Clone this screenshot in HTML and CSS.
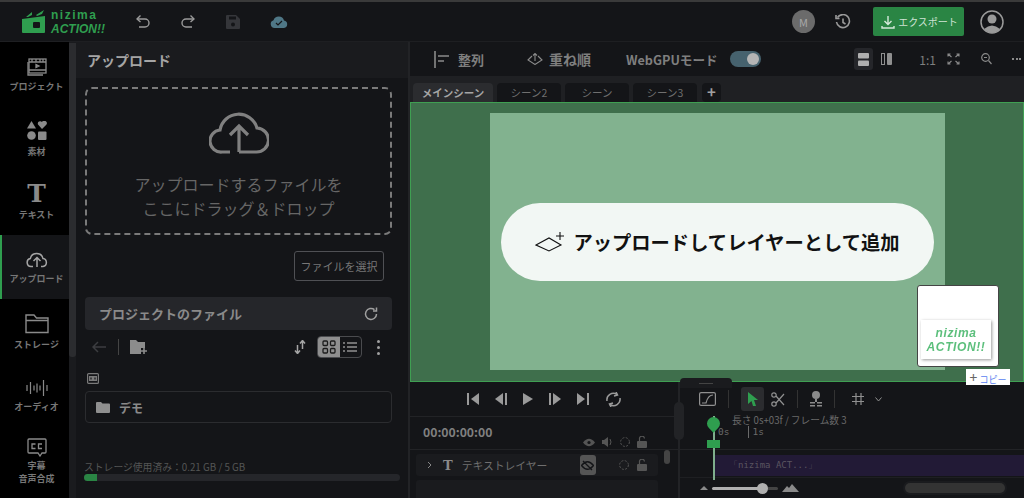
FILE: index.html
```html
<!DOCTYPE html>
<html lang="ja">
<head>
    <meta charset="UTF-8">
    <title>nizima ACTION!!</title>
    <link rel="stylesheet" href="styles.css">
</head>
<body>
    <header class="topbar">
        <div class="logo">
            <svg class="logo-mark" width="24" height="24" viewBox="0 0 24 24"><path d="M0 9 L23 6 L23 22 Q23 23 22 23 L1 23 Q0 23 0 22Z" fill="#2f9e4f"/><path d="M4 7 L10 2 L10 5 L6 7Z M14 5 L22 0 L20 4 L15 6Z" fill="#2f9e4f"/><rect x="11" y="12" width="7" height="6" rx="1" fill="#141518"/></svg>
            <div class="logo-text"><span class="logo-name">nizima</span><span class="logo-action">ACTION!!</span></div>
        </div>
        <button class="top-icon undo"><svg width="14" height="13" viewBox="0 0 14 13" fill="none" stroke="#9a9a9a" stroke-width="1.4"><path d="M4.5 0.5 L1 4 L4.5 7"/><path d="M1 4 H9 A4 4 0 0 1 9 12 H3"/></svg></button>
        <button class="top-icon redo"><svg width="14" height="13" viewBox="0 0 14 13" fill="none" stroke="#9a9a9a" stroke-width="1.4"><path d="M9.5 0.5 L13 4 L9.5 7"/><path d="M13 4 H5 A4 4 0 0 0 5 12 H11"/></svg></button>
        <button class="top-icon save"><svg width="14" height="14" viewBox="0 0 14 14"><path d="M1 0 H10 L14 4 V13 Q14 14 13 14 H1 Q0 14 0 13 V1 Q0 0 1 0Z" fill="#35363a"/><rect x="3" y="1.5" width="7" height="3" fill="#141518"/><circle cx="7" cy="9.5" r="2" fill="#141518"/></svg></button>
        <button class="top-icon cloud"><svg width="18" height="12" viewBox="0 0 18 12"><path d="M4.5 12 A4 4 0 0 1 3.5 4.2 A5.5 5.5 0 0 1 14 4.5 A3.8 3.8 0 0 1 14 12Z" fill="#4f7786"/><path d="M6 7 L8 9 L12 5" stroke="#141518" stroke-width="1.2" fill="none"/></svg></button>
        <div class="top-right">
            <span class="avatar">M</span>
            <svg class="history" width="16" height="16" viewBox="0 0 16 16" fill="none" stroke="#9a9a9a" stroke-width="1.6"><path d="M2.5 3.5 A6.5 6.5 0 1 1 1.5 8"/><path d="M1 1 V4.5 H4.5"/><path d="M8 4.5 V8.5 L10.5 10"/></svg>
            <button class="export">
                <svg width="14" height="14" viewBox="0 0 14 14" fill="none" stroke="#d5e8da" stroke-width="1.4"><path d="M7 1 V9 M3.5 6 L7 9.5 L10.5 6 M1 11 V13 H13 V11"/></svg>
                エクスポート
            </button>
            <svg class="profile" width="24" height="24" viewBox="0 0 24 24"><circle cx="12" cy="12" r="11" fill="none" stroke="#9a9a9a" stroke-width="1.5"/><circle cx="12" cy="9" r="4.5" fill="#9a9a9a"/><path d="M4 19 Q12 12 20 19 Q12 27 4 19Z" fill="#9a9a9a"/></svg>
        </div>
    </header>

    <div class="workspace">
        <nav class="sidebar">
            <a class="side-item">
                <svg width="20" height="18" viewBox="0 0 20 18" fill="none" stroke="#8a8a8a" stroke-width="1.3"><rect x="2" y="1" width="17" height="14"/><path d="M1 4 V17 H16"/><path d="M2 4 H19 M2 12 H19 M5 1 V4 M9 1 V4 M13 1 V4 M16 1 V4"/><path d="M9 6.5 L12 8 L9 9.5Z" fill="#8a8a8a"/></svg>
                <span>プロジェクト</span>
            </a>
            <a class="side-item">
                <svg width="20" height="20" viewBox="0 0 20 20" fill="#8a8a8a"><path d="M4.5 0 L9 7.5 H0Z"/><path d="M15 8 L11 3.5 A2.4 2.4 0 0 1 15 1 A2.4 2.4 0 0 1 19.5 3.5Z"/><circle cx="4.5" cy="14.5" r="4.3"/><rect x="11" y="10.5" width="8.5" height="8.5" rx="1"/></svg>
                <span>素材</span>
            </a>
            <a class="side-item text-item">
                <span class="t-glyph">T</span>
                <span>テキスト</span>
            </a>
            <a class="side-item active">
                <svg width="22" height="17" viewBox="0 0 22 17" fill="none" stroke="#a5a5a5" stroke-width="1.5"><path d="M7 15.5 H5 A4 4 0 0 1 4.3 7.6 A6.5 6.5 0 0 1 17 7.6 A4 4 0 0 1 17 15.5 H15"/><path d="M11 16 V7 M7.5 10 L11 6.5 L14.5 10"/></svg>
                <span>アップロード</span>
            </a>
            <a class="side-item">
                <svg width="24" height="21" viewBox="0 0 24 21" fill="none" stroke="#8a8a8a" stroke-width="1.4"><path d="M1 19.5 V2 H9 L11.5 5 H23 V19.5Z M1 7.5 H23"/></svg>
                <span>ストレージ</span>
            </a>
            <a class="side-item audio-item">
                <svg width="22" height="16" viewBox="0 0 22 16" stroke="#8a8a8a" stroke-width="1.2"><path d="M1 5 V11 M4.5 2 V14 M8 5.5 V10.5 M11 3.5 V12.5 M14 5.5 V10.5 M17.5 0 V16 M21 5 V11"/></svg>
                <span>オーディオ</span>
            </a>
            <a class="side-item cc-item">
                <svg width="20" height="19" viewBox="0 0 20 19" fill="none" stroke="#8a8a8a" stroke-width="1.3"><path d="M2 1 H18 Q19 1 19 2 V14 Q19 15 18 15 H15 L13 18 L11 15 H2 Q1 15 1 14 V2 Q1 1 2 1Z"/><path d="M8.5 6 H5 V10.5 H8.5 M15 6 H11.5 V10.5 H15"/></svg>
                <span>字幕<br>音声合成</span>
            </a>
        </nav>
        <div class="side-scroll"><div class="side-thumb"></div></div>

        <section class="panel">
            <h2 class="panel-title">アップロード</h2>
            <div class="panel-body">
                <div class="dropzone">
                    <svg width="60" height="44" viewBox="0 0 60 44" fill="none" stroke="#808080" stroke-width="3.2"><path d="M21 42 H13 A11 11 0 0 1 11 20 A19 19 0 0 1 48 18 A12 12 0 0 1 47 42 H30"/><path d="M30 42 V17 M21 25 L30 16 L39 25"/></svg>
                    <p>アップロードするファイルを<br>ここにドラッグ＆ドロップ</p>
                </div>
                <div class="select-row"><button class="select-file">ファイルを選択</button></div>
                <div class="files-bar">
                    <span>プロジェクトのファイル</span>
                    <svg width="14" height="14" viewBox="0 0 14 14" fill="none" stroke="#a0a0a0" stroke-width="1.5"><path d="M12.5 7 A5.5 5.5 0 1 1 10.5 2.7"/><path d="M12.5 0.5 V4 H9"/></svg>
                </div>
                <div class="files-tools">
                    <svg width="14" height="12" viewBox="0 0 14 12" fill="none" stroke="#3c3d40" stroke-width="1.5"><path d="M14 6 H1 M6 1 L1 6 L6 11"/></svg>
                    <i class="tool-sep"></i>
                    <svg width="18" height="14" viewBox="0 0 18 14"><path d="M0 0 H6 L8 2 H15 V8 H11 V14 H0Z" fill="#8c8c8c"/><path d="M14 8 V14 M11 11 H17" stroke="#8c8c8c" stroke-width="1.6"/></svg>
                    <svg class="sort-icon" width="12" height="14" viewBox="0 0 12 14" fill="none" stroke="#a5a5a5" stroke-width="1.5"><path d="M3.5 5 V13 M1 10.5 L3.5 13.5 L6 10.5 M8.5 9 V1 M6 3.5 L8.5 0.5 L11 3.5"/></svg>
                    <div class="view-switch">
                        <span class="view-btn on"><svg width="14" height="14" viewBox="0 0 14 14" fill="none" stroke="#1c1c1c" stroke-width="1.3"><rect x="1" y="1" width="4.5" height="4.5" rx="1"/><rect x="8.5" y="1" width="4.5" height="4.5" rx="1"/><rect x="1" y="8.5" width="4.5" height="4.5" rx="1"/><rect x="8.5" y="8.5" width="4.5" height="4.5" rx="1"/></svg></span>
                        <span class="view-btn"><svg width="14" height="12" viewBox="0 0 14 12" stroke="#909090" stroke-width="1.4"><path d="M4 2 H14 M4 6 H14 M4 10 H14 M0 2 H2 M0 6 H2 M0 10 H2"/></svg></span>
                    </div>
                    <span class="dots-v"><i></i><i></i><i></i></span>
                </div>
                <svg class="film-mini" width="12" height="11" viewBox="0 0 12 11"><rect x="0.6" y="0.6" width="10.8" height="9.8" rx="1" fill="none" stroke="#7a7a7a" stroke-width="1.2"/><path d="M2 3 H10 V8 H2Z" fill="#7a7a7a"/><path d="M4 4.5 V6.5 M8 4.5 V6.5" stroke="#141518" stroke-width="1.2"/></svg>
                <div class="folder-row">
                    <svg width="14" height="11" viewBox="0 0 14 11"><path d="M0 1 Q0 0 1 0 H5 L6.5 1.5 H13 Q14 1.5 14 2.5 V10 Q14 11 13 11 H1 Q0 11 0 10Z" fill="#8f8f8f"/></svg>
                    <span>デモ</span>
                </div>
            </div>
            <div class="storage">
                <span>ストレージ使用済み：0.21 GB / 5 GB</span>
                <div class="storage-bar"><div class="storage-fill"></div></div>
            </div>
        </section>

        <main class="editor">
            <div class="editor-tools">
                <svg class="tool-align" width="16" height="17" viewBox="0 0 16 17" stroke="#8a8a8a" stroke-width="1.6"><path d="M1 0 V17 M4 5 H15 M4 10 H10"/></svg>
                <span class="tool-label">整列</span>
                <svg class="tool-order" width="16" height="12" viewBox="0 0 16 12" fill="none" stroke="#8a8a8a" stroke-width="1.1"><path d="M5 3 L1 7 L8 11.5 L15 7 L11 3"/><path d="M8 8 V0.5 M6 2.5 L8 0.5 L10 2.5"/></svg>
                <span class="tool-label order-label">重ね順</span>
                <span class="tool-label webgpu">WebGPUモード</span>
                <span class="toggle"><i></i></span>
                <div class="tools-right">
                    <span class="layout-btn on"><svg width="11" height="13" viewBox="0 0 11 13" fill="#b0b0b0"><rect width="11" height="5.5" rx="1"/><rect y="7.5" width="11" height="5.5" rx="1"/></svg></span>
                    <span class="layout-btn"><svg width="11" height="12" viewBox="0 0 11 12" fill="#8f8f8f"><rect x="0.5" y="0.5" width="3" height="11" fill="none" stroke="#8f8f8f"/><rect x="6" width="5" height="12" rx="1"/></svg></span>
                    <span class="ratio">1:1</span>
                    <svg class="fit" width="13" height="12" viewBox="0 0 13 12" fill="none" stroke="#8a8a8a" stroke-width="1.1"><path d="M1 3.5 V1 H3.5 M1 1 L4.5 4 M12 3.5 V1 H9.5 M12 1 L8.5 4 M1 8.5 V11 H3.5 M1 11 L4.5 8 M12 8.5 V11 H9.5 M12 11 L8.5 8"/></svg>
                    <svg class="zoom-icon" width="11" height="12" viewBox="0 0 11 12" fill="none" stroke="#8a8a8a" stroke-width="1.2"><circle cx="4.5" cy="4.5" r="3.8"/><path d="M7.5 7.5 L10.5 11 M3 4.5 H6"/></svg>
                    <span class="dots-h"><i></i><i></i><i></i></span>
                </div>
            </div>

            <div class="scene-tabs">
                <span class="scene-tab active">メインシーン</span>
                <span class="scene-tab">シーン2</span>
                <span class="scene-tab">シーン</span>
                <span class="scene-tab">シーン3</span>
                <span class="scene-add">+</span>
            </div>

            <div class="canvas">
                <div class="stage"></div>
                <div class="drop-pill">
                    <svg width="30" height="22" viewBox="0 0 30 22" fill="none" stroke="#111" stroke-width="1.1"><path d="M1 14 L14 7 L26 14 L14 20Z"/><path d="M21 5 H29 M25 1 V9"/></svg>
                    <span>アップロードしてレイヤーとして追加</span>
                </div>
                <div class="drag-thumb">
                    <div class="drag-card"><span>nizima<br>ACTION!!</span></div>
                </div>
                <div class="copy-tag"><b>+</b> コピー</div>
            </div>

            <div class="timeline">
                <div class="tl-left">
                    <div class="transport">
                        <svg width="12" height="12" viewBox="0 0 12 12" fill="#9a9a9a"><rect x="0" width="2" height="12"/><path d="M12 0 V12 L4 6Z"/></svg>
                        <svg width="12" height="12" viewBox="0 0 12 12" fill="#9a9a9a"><rect x="10" width="2" height="12"/><path d="M8 0 V12 L0 6Z"/></svg>
                        <svg width="10" height="12" viewBox="0 0 10 12" fill="#9a9a9a"><path d="M0 0 V12 L10 6Z"/></svg>
                        <svg width="12" height="12" viewBox="0 0 12 12" fill="#9a9a9a"><rect x="0" width="2" height="12"/><path d="M4 0 V12 L12 6Z"/></svg>
                        <svg width="12" height="12" viewBox="0 0 12 12" fill="#9a9a9a"><rect x="10" width="2" height="12"/><path d="M0 0 V12 L8 6Z"/></svg>
                        <svg width="17" height="15" viewBox="0 0 17 15" fill="none" stroke="#9a9a9a" stroke-width="1.5"><path d="M2 9 A6.5 6.5 0 0 1 12 2.5 M15 6 A6.5 6.5 0 0 1 5 12.5"/><path d="M11 0 L12.5 3 L9 4 M6 15 L4.5 12 L8 11"/></svg>
                    </div>
                    <div class="time-row">
                        <span class="timecode">00:00:00:00</span>
                        <div class="vis-icons">
                            <svg width="12" height="9" viewBox="0 0 12 9"><path d="M0 4.5 Q6 -3 12 4.5 Q6 12 0 4.5Z" fill="#555"/><circle cx="6" cy="4.5" r="1.6" fill="#141518"/></svg>
                            <svg width="11" height="10" viewBox="0 0 11 10" fill="#555"><path d="M0 3 H2 L6 0 V10 L2 7 H0Z"/><path d="M8 2 Q10 5 8 8" stroke="#555" fill="none"/></svg>
                            <svg width="10" height="10" viewBox="0 0 10 10" fill="none" stroke="#555" stroke-dasharray="2 1.5"><circle cx="5" cy="5" r="4.4"/></svg>
                            <svg width="10" height="12" viewBox="0 0 10 12"><rect y="5" width="10" height="7" rx="1" fill="#555"/><path d="M2.5 5 V3 A2.5 2.5 0 0 1 7.5 2.5" stroke="#555" fill="none" stroke-width="1.2"/></svg>
                        </div>
                    </div>
                    <div class="tracks">
                        <div class="track-list">
                            <div class="track-row">
                                <svg width="5" height="8" viewBox="0 0 5 8" fill="none" stroke="#888"><path d="M1 1 L4 4 L1 7"/></svg>
                                <span class="track-t">T</span>
                                <span class="track-name">テキストレイヤー</span>
                                <span class="hide-btn"><svg width="13" height="11" viewBox="0 0 13 11" fill="none" stroke="#141518" stroke-width="1.3"><path d="M0.5 5.5 Q6.5 -2 12.5 5.5 Q6.5 13 0.5 5.5Z M2 1 L11 10"/></svg></span>
                                <svg class="track-circle" width="10" height="10" viewBox="0 0 10 10" fill="none" stroke="#555" stroke-dasharray="2 1.5"><circle cx="5" cy="5" r="4.4"/></svg>
                                <svg width="10" height="12" viewBox="0 0 10 12"><rect y="5" width="10" height="7" rx="1" fill="#555"/><path d="M2.5 5 V3 A2.5 2.5 0 0 1 7.5 2.5" stroke="#555" fill="none" stroke-width="1.2"/></svg>
                            </div>
                            <div class="track-row empty"></div>
                        </div>
                        <div class="track-scroll"></div>
                    </div>
                </div>

                <div class="tl-right">
                    <div class="tl-tools">
                        <svg width="17" height="14" viewBox="0 0 17 14" fill="none" stroke="#909090" stroke-width="1.2"><rect x="0.6" y="0.6" width="15.8" height="12.8" rx="1.5"/><path d="M3 11 H7 Q9 3 14 3"/></svg>
                        <i class="tl-sep"></i>
                        <span class="tl-select"><svg width="10" height="14" viewBox="0 0 10 14" fill="#2f9e4f"><path d="M0 0 L10 8 H6 L8 14 L5 14 L3.5 9 L0 12Z"/></svg></span>
                        <svg width="14" height="15" viewBox="0 0 14 15" fill="none" stroke="#909090" stroke-width="1.2"><circle cx="3" cy="3" r="2.2"/><circle cx="3" cy="12" r="2.2"/><path d="M5 4 L13 13 M5 11 L13 2"/></svg>
                        <i class="tl-sep"></i>
                        <svg width="12" height="16" viewBox="0 0 12 16" fill="#8a8a8a"><circle cx="6" cy="4" r="4"/><rect x="5" y="8" width="2" height="3"/><path d="M0 11 H5 V12.5 H0Z M7 11 H12 V12.5 H7Z M0 14 H5 V15.5 H0Z M7 14 H12 V15.5 H7Z"/></svg>
                        <i class="tl-sep"></i>
                        <svg class="grid-icon" width="12" height="12" viewBox="0 0 12 12" stroke="#909090" stroke-width="1.2"><path d="M4 0 V12 M9 0 V12 M0 3.5 H12 M0 8.5 H12"/></svg>
                        <svg class="grid-more" width="7" height="5" viewBox="0 0 7 5" fill="none" stroke="#909090"><path d="M0.5 0.5 L3.5 4 L6.5 0.5"/></svg>
                    </div>
                    <div class="ruler">
                        <span class="duration">長さ 0s+03f / フレーム数 3</span>
                        <div class="ruler-marks"><span>0s</span><span class="mark-1s">1s</span></div>
                    </div>
                    <div class="clip-row"><div class="clip">「nizima ACT...」</div></div>
                    <div class="tl-bottom">
                        <svg width="8" height="4" viewBox="0 0 8 4" fill="#8a8a8a"><path d="M4 0 L8 4 H0Z"/></svg>
                        <div class="zoom-slider"><i></i></div>
                        <svg width="17" height="8" viewBox="0 0 17 8" fill="#8a8a8a"><path d="M0 8 L5 2 L7 4 L10 0 L17 8Z"/></svg>
                        <div class="h-scroll"><i></i></div>
                    </div>
                    <div class="playhead"><span class="pin"></span><span class="key"></span></div>
                </div>
                <div class="split-grip"></div>
                <div class="top-grip"><i></i></div>
            </div>
        </main>
    </div>
</body>
</html>
```

FILE: styles.css
```css
* {
    box-sizing: border-box;
}

body {
    margin: 0;
    width: 1024px;
    height: 498px;
    overflow: hidden;
    display: flex;
    flex-direction: column;
    background-color: #141518;
    color: #9a9a9a;
    font-family: "Noto Sans CJK JP", "Noto Sans", sans-serif;
}

button {
    font-family: inherit;
    border: none;
    background: none;
    padding: 0;
}

svg {
    display: block;
    flex: none;
}

/* top bar */
.topbar {
    height: 42px;
    flex: none;
    display: flex;
    align-items: center;
    padding-left: 22px;
    padding-right: 20px;
    border-top: 2px solid #3a3a3a;
    border-bottom: 1px solid #1e1f22;
    background-color: #141518;
}

.logo {
    display: flex;
    align-items: center;
    gap: 5px;
    width: 111px;
}

.logo-text {
    display: flex;
    flex-direction: column;
    color: #2f9e4f;
    font-family: "Liberation Sans", sans-serif;
    font-weight: 700;
    font-size: 12px;
    line-height: 14px;
}

.logo-name {
    letter-spacing: 1.5px;
}

.logo-action {
    font-style: italic;
}

.top-icon {
    display: flex;
    justify-content: center;
    width: 20px;
}

.redo { margin-left: 25px; }
.save { margin-left: 25px; }
.cloud { margin-left: 26px; }

.top-right {
    margin-left: auto;
    display: flex;
    align-items: center;
}

.avatar {
    width: 23px;
    height: 23px;
    border-radius: 50%;
    background-color: #6b6b6b;
    color: #a8a8a8;
    font-size: 11px;
    display: flex;
    align-items: center;
    justify-content: center;
}

.history {
    margin-left: 20px;
}

.export {
    margin-left: 22px;
    width: 91px;
    height: 29px;
    padding-left: 2px;
    border-radius: 2px;
    background-color: #2a8544;
    color: #cfe3d4;
    font-size: 10px;
    display: flex;
    align-items: center;
    justify-content: center;
    gap: 3px;
}

.profile {
    margin-left: 16px;
}

/* main layout */
.workspace {
    flex: 1;
    display: flex;
    min-height: 0;
}

.sidebar {
    width: 69px;
    flex: none;
    background-color: #000;
    padding-top: 1px;
}

.side-item {
    height: 64px;
    padding-left: 4px;
    display: flex;
    flex-direction: column;
    align-items: center;
    justify-content: center;
    gap: 5px;
    color: #777;
    font-size: 9px;
    font-weight: 700;
    line-height: 11px;
    text-align: center;
}

.side-item.active {
    background-color: #141518;
    border-left: 2px solid #2f9e4f;
    padding-left: 2px;
}

.text-item {
    gap: 3px;
    padding-bottom: 4px;
}

.audio-item {
    padding-top: 2px;
}

.cc-item {
    gap: 2px;
    padding-top: 5px;
    line-height: 13px;
}

.t-glyph {
    font-family: "DejaVu Serif", serif;
    font-size: 25px;
    line-height: 24px;
    font-weight: 700;
    color: #8a8a8a;
}

.side-scroll {
    width: 7px;
    flex: none;
    background-color: #1a1b1e;
}

.side-thumb {
    height: 314px;
    margin-top: 1px;
    background-color: #2b2c2f;
    border-radius: 0 0 3px 3px;
}

.panel {
    width: 334px;
    flex: none;
    display: flex;
    flex-direction: column;
    border-right: 2px solid #222326;
}

.panel-title {
    margin: 0;
    height: 36px;
    flex: none;
    padding-left: 11px;
    background-color: #1a1b1e;
    color: #a5a5a5;
    font-size: 14px;
    line-height: 36px;
    font-weight: 700;
}

.panel-body {
    flex: 1;
    padding: 9px 16px 0 9px;
    display: flex;
    flex-direction: column;
}

.dropzone {
    height: 148px;
    flex: none;
    border: 2px dashed #7a7a7a;
    border-radius: 7px;
    display: flex;
    flex-direction: column;
    align-items: center;
    padding-top: 21px;
}

.dropzone p {
    margin: 18px 0 0;
    color: #666;
    font-size: 16px;
    line-height: 24px;
    text-align: center;
}

.select-row {
    display: flex;
    justify-content: flex-end;
    padding: 16px 8px 16px 0;
}

.select-file {
    width: 90px;
    height: 30px;
    border: 1px solid #4f5054;
    border-radius: 3px;
    color: #777;
    font-size: 11px;
}

.files-bar {
    height: 33px;
    flex: none;
    padding: 0 14px;
    border-radius: 4px;
    background-color: #25262a;
    color: #8a8a8a;
    font-size: 13px;
    font-weight: 700;
    display: flex;
    align-items: center;
    justify-content: space-between;
}

.files-tools {
    height: 22px;
    margin-top: 6px;
    flex: none;
    display: flex;
    align-items: center;
    padding-left: 7px;
}

.tool-sep {
    width: 1px;
    height: 16px;
    margin: 0 11px 0 12px;
    background-color: #444;
}

.sort-icon {
    margin-left: 146px;
}

.view-switch {
    margin-left: 11px;
    display: flex;
    width: 45px;
    height: 22px;
    border: 1px solid #4a4b4e;
    border-radius: 4px;
    overflow: hidden;
}

.view-btn {
    flex: 1;
    display: flex;
    align-items: center;
    justify-content: center;
}

.view-btn.on {
    background-color: #8f8f8f;
}

.dots-v {
    margin-left: 15px;
    display: flex;
    flex-direction: column;
    gap: 3px;
}

.dots-v i {
    width: 3px;
    height: 3px;
    border-radius: 50%;
    background-color: #a0a0a0;
}

.film-mini {
    margin: 15px 0 0 2px;
}

.folder-row {
    height: 32px;
    margin-top: 7px;
    flex: none;
    padding-left: 10px;
    display: flex;
    align-items: center;
    gap: 9px;
    border: 1px solid #2b2c2f;
    border-radius: 4px;
    color: #8a8a8a;
    font-size: 12px;
    font-weight: 700;
}

.storage {
    padding: 0 8px 17px 8px;
    color: #555;
    font-size: 9.8px;
    line-height: 14px;
}

.storage-bar {
    height: 7px;
    border-radius: 4px;
    background-color: #25262a;
    overflow: hidden;
}

.storage-fill {
    width: 13px;
    height: 100%;
    background-color: #2a8544;
}

/* editor */
.editor {
    flex: 1;
    min-width: 0;
    display: flex;
    flex-direction: column;
}

.editor-tools {
    height: 34px;
    flex: none;
    display: flex;
    align-items: center;
    padding-left: 24px;
}

.tool-label {
    color: #7f7f7f;
    font-size: 13px;
    font-weight: 700;
    margin-left: 8px;
}

.tool-order {
    margin-left: 43px;
}

.tool-label.order-label {
    margin-left: 6px;
    font-size: 14px;
}

.tool-label.webgpu {
    margin-left: 35px;
    font-size: 12.6px;
}

.toggle {
    margin-left: 12px;
    width: 31px;
    height: 16px;
    border-radius: 8px;
    background-color: #46626e;
    display: flex;
    justify-content: flex-end;
    padding: 2px;
}

.toggle i {
    width: 12px;
    height: 12px;
    border-radius: 50%;
    background-color: #b5b5b5;
}

.tools-right {
    margin-left: auto;
    display: flex;
    align-items: center;
    padding-right: 3px;
}

.layout-btn {
    width: 19px;
    height: 22px;
    border-radius: 3px;
    display: flex;
    align-items: center;
    justify-content: center;
}

.layout-btn.on {
    background-color: #25262a;
    margin-right: 4px;
}

.ratio {
    margin-left: 23px;
    color: #7f7f7f;
    font-size: 12px;
}

.fit {
    margin-left: 11px;
}

.zoom-icon {
    margin-left: 21px;
}

.dots-h {
    margin-left: 20px;
    width: 9px;
    display: flex;
    justify-content: space-between;
}

.dots-h i {
    width: 2px;
    height: 2px;
    background-color: #8a8a8a;
}

.scene-tabs {
    height: 26px;
    flex: none;
    padding: 7px 0 0 3px;
    display: flex;
    gap: 4px;
    background-color: #1f2023;
}

.scene-tab {
    width: 64px;
    height: 19px;
    border-radius: 4px 4px 0 0;
    background-color: #141518;
    color: #6f6f6f;
    font-size: 10.5px;
    line-height: 19px;
    text-align: center;
}

.scene-tab.active {
    width: 80px;
    background-color: #2b2c2f;
    color: #a5a5a5;
    font-weight: 700;
}

.scene-add {
    width: 19px;
    height: 19px;
    margin-left: 1px;
    border-radius: 4px;
    background-color: #141518;
    color: #a0a0a0;
    font-size: 15px;
    font-weight: 700;
    line-height: 17px;
    text-align: center;
}

.canvas {
    position: relative;
    height: 280px;
    flex: none;
    padding-top: 10px;
    padding-left: 79px;
    background-color: #3f6f4c;
    border: 1px solid #3f9f52;
}

.stage {
    width: 455px;
    height: 257px;
    background-color: #82b28f;
}

.drop-pill {
    position: absolute;
    left: 90px;
    top: 100px;
    width: 433px;
    height: 78px;
    border-radius: 39px;
    background-color: #f2f7f4;
    display: flex;
    align-items: center;
    justify-content: center;
    gap: 8px;
    color: #111;
    font-size: 19.3px;
    font-weight: 700;
}

.drag-thumb {
    position: absolute;
    left: 506px;
    top: 182px;
    width: 82px;
    height: 82px;
    padding: 34px 7px 0 3px;
    background-color: #fff;
    border: 1px solid #444;
    border-radius: 3px;
}

.drag-card {
    height: 39px;
    background-color: #fff;
    box-shadow: 1px 1px 3px rgba(0, 0, 0, 0.4);
    display: flex;
    align-items: center;
    justify-content: center;
}

.drag-card span {
    color: #5cbf7c;
    font-family: "Liberation Sans", sans-serif;
    font-size: 12px;
    line-height: 14px;
    font-weight: 700;
    font-style: italic;
    text-align: center;
    letter-spacing: 0.6px;
    filter: blur(0.5px);
}

.copy-tag {
    position: absolute;
    left: 555px;
    top: 266px;
    width: 44px;
    height: 16px;
    background-color: #fff;
    color: #5a7ff0;
    font-size: 9px;
    line-height: 16px;
    text-align: center;
    z-index: 2;
}

.copy-tag b {
    color: #666;
    font-size: 14px;
    font-weight: 400;
}

/* timeline */
.timeline {
    position: relative;
    flex: 1;
    display: flex;
    min-height: 0;
}

.tl-left {
    width: 268px;
    flex: none;
    display: flex;
    flex-direction: column;
}

.transport {
    height: 35px;
    flex: none;
    display: flex;
    align-items: center;
    justify-content: center;
    gap: 16px;
    border-bottom: 1px solid #222326;
}

.time-row {
    height: 33px;
    flex: none;
    padding-left: 13px;
    position: relative;
    display: flex;
    border-bottom: 1px solid #222326;
}

.timecode {
    margin-top: 6px;
    color: #808080;
    font-size: 12.2px;
    font-weight: 700;
}

.vis-icons {
    margin-left: 91px;
    margin-top: 19px;
    display: flex;
    align-items: center;
    gap: 7px;
    height: 12px;
}

.tracks {
    flex: 1;
    display: flex;
    min-height: 0;
}

.track-list {
    width: 248px;
    flex: none;
    padding: 4px 0 0 6px;
}

.track-row {
    height: 22px;
    border-radius: 3px;
    background-color: #1a1b1e;
    display: flex;
    align-items: center;
    padding-left: 11px;
}

.track-row.empty {
    margin-top: 4px;
}

.track-t {
    margin-left: 11px;
    font-family: "DejaVu Serif", serif;
    font-size: 13px;
    font-weight: 700;
    color: #8a8a8a;
}

.track-name {
    margin-left: 9px;
    width: 118px;
    color: #6f6f6f;
    font-size: 10.8px;
}

.hide-btn {
    width: 16px;
    height: 20px;
    border-radius: 3px;
    background-color: #555;
    display: flex;
    align-items: center;
    justify-content: center;
}

.track-circle {
    margin: 0 8px 0 23px;
}

.track-scroll {
    width: 6px;
    height: 14px;
    margin-left: 6px;
    border-radius: 3px;
    background-color: #444;
}

.tl-right {
    position: relative;
    flex: 1;
    min-width: 0;
    display: flex;
    flex-direction: column;
    border-left: 2px solid #222326;
}

.tl-tools {
    height: 34px;
    flex: none;
    display: flex;
    align-items: center;
    padding-left: 19px;
}

.tl-sep {
    width: 1px;
    height: 18px;
    margin: 0 12px;
    background-color: #333;
}

.tl-select {
    width: 23px;
    height: 24px;
    margin-right: 7px;
    border-radius: 3px;
    background-color: #2b2c2f;
    display: flex;
    align-items: center;
    justify-content: center;
}

.grid-icon {
    margin-left: 5px;
}

.grid-more {
    margin-left: 11px;
}

.ruler {
    height: 34px;
    flex: none;
    padding-left: 52px;
    border-bottom: 1px solid #222326;
    color: #6a6a6a;
    font-family: "DejaVu Sans Mono", monospace;
    font-size: 9.5px;
    line-height: 11px;
}

.duration {
    display: block;
    margin-top: -1px;
    font-family: "Noto Sans CJK JP", monospace;
    font-size: 9.7px;
}

.ruler-marks {
    display: flex;
    margin-left: -14px;
    height: 12px;
}

.mark-1s {
    margin-left: 19px;
    padding-left: 3px;
    border-left: 1px solid #6a6a6a;
}

.clip-row {
    height: 28px;
    flex: none;
    padding: 5px 0 0 35px;
    border-bottom: 1px solid #1e1f22;
}

.clip {
    height: 21px;
    padding-left: 14px;
    background-color: #221a36;
    color: #5a5560;
    font-family: "DejaVu Sans Mono", monospace;
    font-size: 9px;
    line-height: 21px;
}

.tl-bottom {
    flex: 1;
    display: flex;
    align-items: center;
    padding-left: 20px;
}

.zoom-slider {
    position: relative;
    margin: 0 4px;
    width: 66px;
    height: 3px;
    border-radius: 2px;
    background: linear-gradient(to right, #b0b0b0 78%, #444 78%);
}

.zoom-slider i {
    position: absolute;
    left: 45px;
    top: -4px;
    width: 11px;
    height: 11px;
    border-radius: 50%;
    background-color: #b0b0b0;
}

.h-scroll {
    margin-left: 104px;
    width: 104px;
    height: 14px;
    padding: 2px;
    border-radius: 7px;
    background-color: #1a1b1e;
}

.h-scroll i {
    display: block;
    height: 100%;
    border-radius: 5px;
    background-color: #333;
}

.playhead {
    position: absolute;
    left: 33px;
    top: 34px;
    bottom: 18px;
    width: 2px;
    background-color: #7fae8d;
}

.pin {
    position: absolute;
    left: -6px;
    top: 1px;
    width: 13px;
    height: 13px;
    border-radius: 50% 50% 0 50%;
    transform: rotate(45deg);
    background-color: #2f9e4f;
}

.key {
    position: absolute;
    left: -6px;
    top: 24px;
    width: 13px;
    height: 8px;
    background-color: #2f9e4f;
}

.split-grip {
    position: absolute;
    left: 264px;
    top: 20px;
    width: 10px;
    height: 38px;
    border-radius: 5px;
    background-color: #222326;
}

.top-grip {
    position: absolute;
    left: 270px;
    top: -4px;
    width: 52px;
    height: 10px;
    border-radius: 4px 4px 0 0;
    background-color: #1a1b1e;
    display: flex;
    justify-content: center;
    padding-top: 5px;
}

.top-grip i {
    width: 14px;
    height: 1px;
    background-color: #444;
}
```
